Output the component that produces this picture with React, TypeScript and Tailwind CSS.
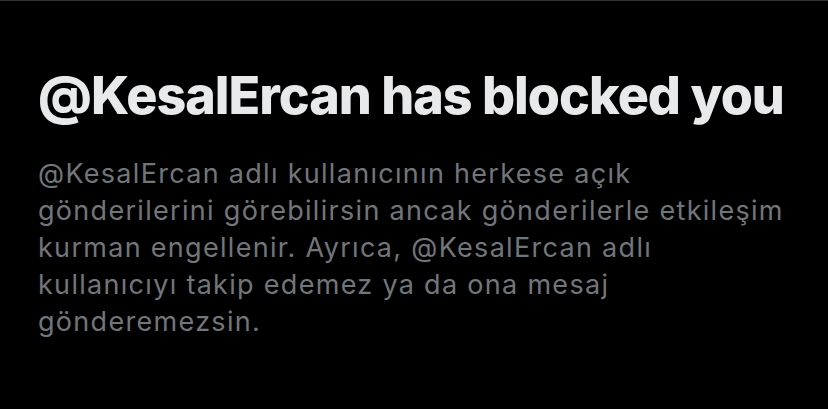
export default function App() {
  const lines = [
    "@KesalErcan adlı kullanıcının herkese açık",
    "gönderilerini görebilirsin ancak gönderilerle etkileşim",
    "kurman engellenir. Ayrıca, @KesalErcan adlı",
    "kullanıcıyı takip edemez ya da ona mesaj",
    "gönderemezsin.",
  ];
  return (
    <div className="w-[828px] h-[409px] bg-black border-t border-[#2f3336] overflow-hidden font-['Inter',sans-serif]">
      <div className="pl-[38px] pt-[65px]">
        <h1 className="text-[52px] leading-[60px] font-extrabold text-[#e7e9ea] tracking-[-1px] whitespace-nowrap">
          @KesalErcan has blocked you
        </h1>
        <p className="mt-[29px] text-[27px] leading-[37px] tracking-[1.3px] text-[#71767b]">
          {lines.map((l) => (
            <span key={l} className="block whitespace-nowrap">
              {l}
            </span>
          ))}
        </p>
      </div>
    </div>
  );
}
